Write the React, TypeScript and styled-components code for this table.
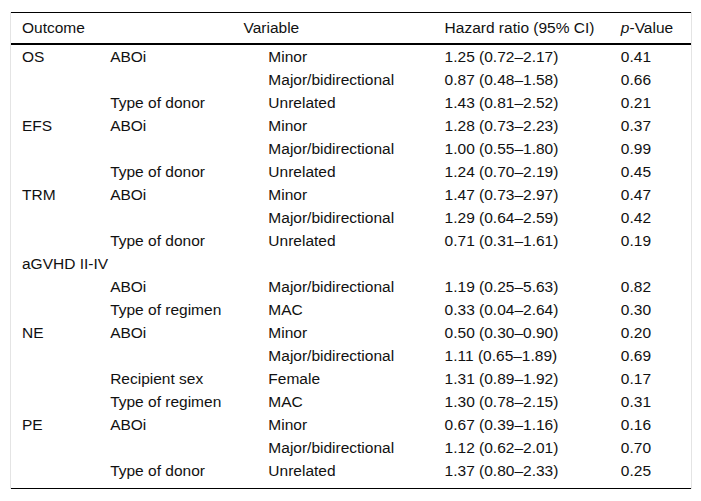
import React from 'react';
import styled, { createGlobalStyle } from 'styled-components';

type Row = {
  outcome?: string;
  variable?: string;
  level?: string;
  hr?: string;
  p?: string;
  span?: boolean;
};

const rows: Row[] = [
  { outcome: 'OS', variable: 'ABOi', level: 'Minor', hr: '1.25 (0.72–2.17)', p: '0.41' },
  { level: 'Major/bidirectional', hr: '0.87 (0.48–1.58)', p: '0.66' },
  { variable: 'Type of donor', level: 'Unrelated', hr: '1.43 (0.81–2.52)', p: '0.21' },
  { outcome: 'EFS', variable: 'ABOi', level: 'Minor', hr: '1.28 (0.73–2.23)', p: '0.37' },
  { level: 'Major/bidirectional', hr: '1.00 (0.55–1.80)', p: '0.99' },
  { variable: 'Type of donor', level: 'Unrelated', hr: '1.24 (0.70–2.19)', p: '0.45' },
  { outcome: 'TRM', variable: 'ABOi', level: 'Minor', hr: '1.47 (0.73–2.97)', p: '0.47' },
  { level: 'Major/bidirectional', hr: '1.29 (0.64–2.59)', p: '0.42' },
  { variable: 'Type of donor', level: 'Unrelated', hr: '0.71 (0.31–1.61)', p: '0.19' },
  { outcome: 'aGVHD II-IV', span: true },
  { variable: 'ABOi', level: 'Major/bidirectional', hr: '1.19 (0.25–5.63)', p: '0.82' },
  { variable: 'Type of regimen', level: 'MAC', hr: '0.33 (0.04–2.64)', p: '0.30' },
  { outcome: 'NE', variable: 'ABOi', level: 'Minor', hr: '0.50 (0.30–0.90)', p: '0.20' },
  { level: 'Major/bidirectional', hr: '1.11 (0.65–1.89)', p: '0.69' },
  { variable: 'Recipient sex', level: 'Female', hr: '1.31 (0.89–1.92)', p: '0.17' },
  { variable: 'Type of regimen', level: 'MAC', hr: '1.30 (0.78–2.15)', p: '0.31' },
  { outcome: 'PE', variable: 'ABOi', level: 'Minor', hr: '0.67 (0.39–1.16)', p: '0.16' },
  { level: 'Major/bidirectional', hr: '1.12 (0.62–2.01)', p: '0.70' },
  { variable: 'Type of donor', level: 'Unrelated', hr: '1.37 (0.80–2.33)', p: '0.25' },
];

const App = () => {
  return (
    <>
      <GlobalStyle />
      <Frame>
        <Table>
          <colgroup>
            <Col $w={87} />
            <Col $w={158} />
            <Col $w={176} />
            <Col $w={176} />
            <Col $w={82} />
          </colgroup>
          <thead>
            <HeadRow>
              <Th>Outcome</Th>
              <Th colSpan={2} $center>
                Variable
              </Th>
              <Th>Hazard ratio (95% CI)</Th>
              <Th>
                <i>p</i>-Value
              </Th>
            </HeadRow>
          </thead>
          <tbody>
            {rows.map((row, idx) =>
              row.span ? (
                <BodyRow key={idx}>
                  <Td colSpan={5}>{row.outcome}</Td>
                </BodyRow>
              ) : (
                <BodyRow key={idx}>
                  <Td>{row.outcome}</Td>
                  <Td>{row.variable}</Td>
                  <Td>{row.level}</Td>
                  <Td>{row.hr}</Td>
                  <Td>{row.p}</Td>
                </BodyRow>
              )
            )}
          </tbody>
        </Table>
      </Frame>
    </>
  );
};

export default App;

const GlobalStyle = createGlobalStyle`
  html, body {
    margin: 0;
    padding: 0;
    background: #ffffff;
  }
  body {
    font-family: "Liberation Sans", Arial, sans-serif;
    color: #111111;
  }
`;

// 양옆 회색 테두리
const Frame = styled.div`
  margin: 12px 0 0 10px;
  width: 680px;
  border-left: 1px solid #e4e4e4;
  border-right: 1px solid #e4e4e4;
`;

const Table = styled.table`
  width: 680px;
  table-layout: fixed;
  border-collapse: collapse;
  border-top: 1px solid #000000;
  border-bottom: 1px solid #000000;
  font-size: 15.5px;
`;

const Col = styled.col<{ $w: number }>`
  width: ${(p) => p.$w}px;
`;

const HeadRow = styled.tr`
  border-bottom: 2px solid #000000;
`;

const Th = styled.th<{ $center?: boolean }>`
  height: 30px;
  padding: 0 0 0 11px;
  font-weight: normal;
  text-align: ${(p) => (p.$center ? 'center' : 'left')};
  vertical-align: middle;
  white-space: nowrap;

  & + & {
    padding-left: 12px;
  }
`;

const BodyRow = styled.tr`
  &:last-child td {
    padding-bottom: 6px;
  }
`;

const Td = styled.td`
  height: 23px;
  padding: 0 0 0 11px;
  line-height: 23px;
  vertical-align: top;
  white-space: nowrap;

  & + & {
    padding-left: 12px;
  }
`;
